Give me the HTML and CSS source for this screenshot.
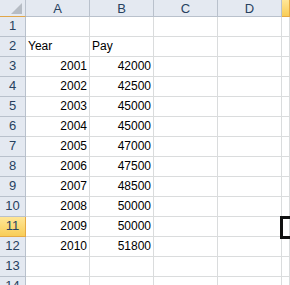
FILE: index.html
```html
<!DOCTYPE html>
<html lang="en">
<head>
    <meta charset="UTF-8">
    <title>Book1 - Sheet1</title>
    <link rel="stylesheet" href="styles.css">
</head>
<body>
    <div class="sheet">
        <div class="hd corner"><span class="tri"></span></div>
        <div class="hd col">A</div>
        <div class="hd col">B</div>
        <div class="hd col">C</div>
        <div class="hd col">D</div>
        <div class="hd col sel"></div>

        <div class="hd row">1</div><div class="c"></div><div class="c"></div><div class="c"></div><div class="c"></div><div class="c"></div>
        <div class="hd row">2</div><div class="c">Year</div><div class="c">Pay</div><div class="c"></div><div class="c"></div><div class="c"></div>
        <div class="hd row">3</div><div class="c n">2001</div><div class="c n">42000</div><div class="c"></div><div class="c"></div><div class="c"></div>
        <div class="hd row">4</div><div class="c n">2002</div><div class="c n">42500</div><div class="c"></div><div class="c"></div><div class="c"></div>
        <div class="hd row">5</div><div class="c n">2003</div><div class="c n">45000</div><div class="c"></div><div class="c"></div><div class="c"></div>
        <div class="hd row">6</div><div class="c n">2004</div><div class="c n">45000</div><div class="c"></div><div class="c"></div><div class="c"></div>
        <div class="hd row">7</div><div class="c n">2005</div><div class="c n">47000</div><div class="c"></div><div class="c"></div><div class="c"></div>
        <div class="hd row">8</div><div class="c n">2006</div><div class="c n">47500</div><div class="c"></div><div class="c"></div><div class="c"></div>
        <div class="hd row">9</div><div class="c n">2007</div><div class="c n">48500</div><div class="c"></div><div class="c"></div><div class="c"></div>
        <div class="hd row">10</div><div class="c n">2008</div><div class="c n">50000</div><div class="c"></div><div class="c"></div><div class="c"></div>
        <div class="hd row sel">11</div><div class="c n">2009</div><div class="c n">50000</div><div class="c"></div><div class="c"></div><div class="c active"><span class="cursor"></span></div>
        <div class="hd row">12</div><div class="c n">2010</div><div class="c n">51800</div><div class="c"></div><div class="c"></div><div class="c"></div>
        <div class="hd row">13</div><div class="c"></div><div class="c"></div><div class="c"></div><div class="c"></div><div class="c"></div>
        <div class="hd row">14</div><div class="c"></div><div class="c"></div><div class="c"></div><div class="c"></div><div class="c"></div>
    </div>
</body>
</html>
```

FILE: styles.css
```css
body { margin: 0; background: #fff; overflow: hidden; font-family: "Liberation Sans", Arial, sans-serif; font-size: 12px; }
.sheet { display: grid; grid-template-columns: 26px repeat(4, 64px) 8px; grid-template-rows: 17px repeat(13, 20px) 11px; overflow: hidden; }
.c { box-sizing: border-box; border-right: 1px solid #dadcdd; border-bottom: 1px solid #dadcdd; padding: 0 2px 3px; display: flex; align-items: flex-end; color: #000; white-space: nowrap; }
.c.n { justify-content: flex-end; }
.hd { box-sizing: border-box; background: #e4e9f1; color: #27415f; border-right: 1px solid #b9c1cc; border-bottom: 1px solid #b9c1cc; display: flex; align-items: center; justify-content: center; font-size: 13px; }
.hd.col { padding-top: 1px; }
.hd.row { padding-top: 1px; align-items: flex-start; }
.corner { position: relative; border-bottom-color: #e0a64a; }
.tri { position: absolute; right: 3px; bottom: 2px; width: 0; height: 0; border-left: 11px solid transparent; border-bottom: 11px solid #b6bcc4; }
.hd.sel { background: linear-gradient(#ffe697, #f8cd57); border-color: #e5a944; }
.active { position: relative; }
.cursor { position: absolute; left: -2px; top: -1px; width: 20px; height: 23px; box-sizing: border-box; border: 3px solid #111; }
```
